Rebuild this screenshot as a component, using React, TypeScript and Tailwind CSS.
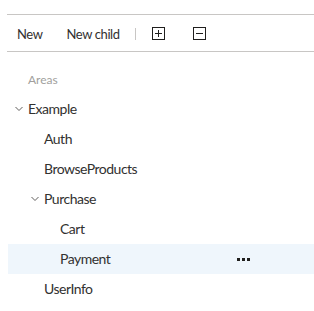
import React from "react";

type Node = {
  label: string;
  depth: number;
  expanded?: boolean;
  selected?: boolean;
};

const nodes: Node[] = [
  { label: "Example", depth: 0, expanded: true },
  { label: "Auth", depth: 1 },
  { label: "BrowseProducts", depth: 1 },
  { label: "Purchase", depth: 1, expanded: true },
  { label: "Cart", depth: 2 },
  { label: "Payment", depth: 2, selected: true },
  { label: "UserInfo", depth: 1 },
];

const pad = ["pl-5", "pl-9", "pl-[52px]"];

function Chevron() {
  return (
    <svg
      width="8"
      height="5"
      viewBox="0 0 8 5"
      className="absolute -left-[13px] top-1/2 -translate-y-1/2"
    >
      <path d="M0.5 0.5 L4 4 L7.5 0.5" fill="none" stroke="#605e5c" strokeWidth="1" />
    </svg>
  );
}

function BoxIcon({ minus }: { minus?: boolean }) {
  return (
    <svg width="13" height="13" viewBox="0 0 13 13">
      <rect x="0.5" y="0.5" width="12" height="12" fill="none" stroke="#201f1e" />
      <path d="M3 6.5 H10" stroke="#201f1e" />
      {!minus && <path d="M6.5 3 V10" stroke="#201f1e" />}
    </svg>
  );
}

export default function App() {
  return (
    <div
      className="w-[314px] h-[311px] overflow-hidden bg-white pt-[14px] pl-[7px] text-[#323130]"
      style={{ fontFamily: '"Segoe UI", Lato, sans-serif' }}
    >
      {/* Toolbar */}
      <div className="flex items-center h-[38px] border-y border-[#c8c6c4] text-[13px] tracking-[-0.4px]">
        <button className="ml-[10px] pt-[3px]">New</button>
        <button className="ml-[24px] pt-[3px]">New child</button>
        <span className="ml-[15px] mt-[2px] h-3 w-px bg-[#c8c6c4]" />
        <button className="ml-4">
          <BoxIcon />
        </button>
        <button className="ml-7">
          <BoxIcon minus />
        </button>
      </div>

      {/* Tree */}
      <div className="mt-[12px] ml-px">
        <div className="h-[30px] pl-5 pt-[2px] flex items-center text-xs text-[#a19f9d]">Areas</div>
        {nodes.map((n) => (
          <div
            key={n.label}
            className={`flex items-center h-[30px] text-sm tracking-[-0.5px] ${pad[n.depth]} ${
              n.selected ? "bg-[#eff6fc]" : ""
            }`}
          >
            <span className="relative">
              {n.expanded && <Chevron />}
              {n.label}
            </span>
            {n.selected && (
              <span className="ml-auto mr-[64px] flex gap-[2px]">
                <span className="h-[3px] w-[3px] bg-[#201f1e]" />
                <span className="h-[3px] w-[3px] bg-[#201f1e]" />
                <span className="h-[3px] w-[3px] bg-[#201f1e]" />
              </span>
            )}
          </div>
        ))}
      </div>
    </div>
  );
}
